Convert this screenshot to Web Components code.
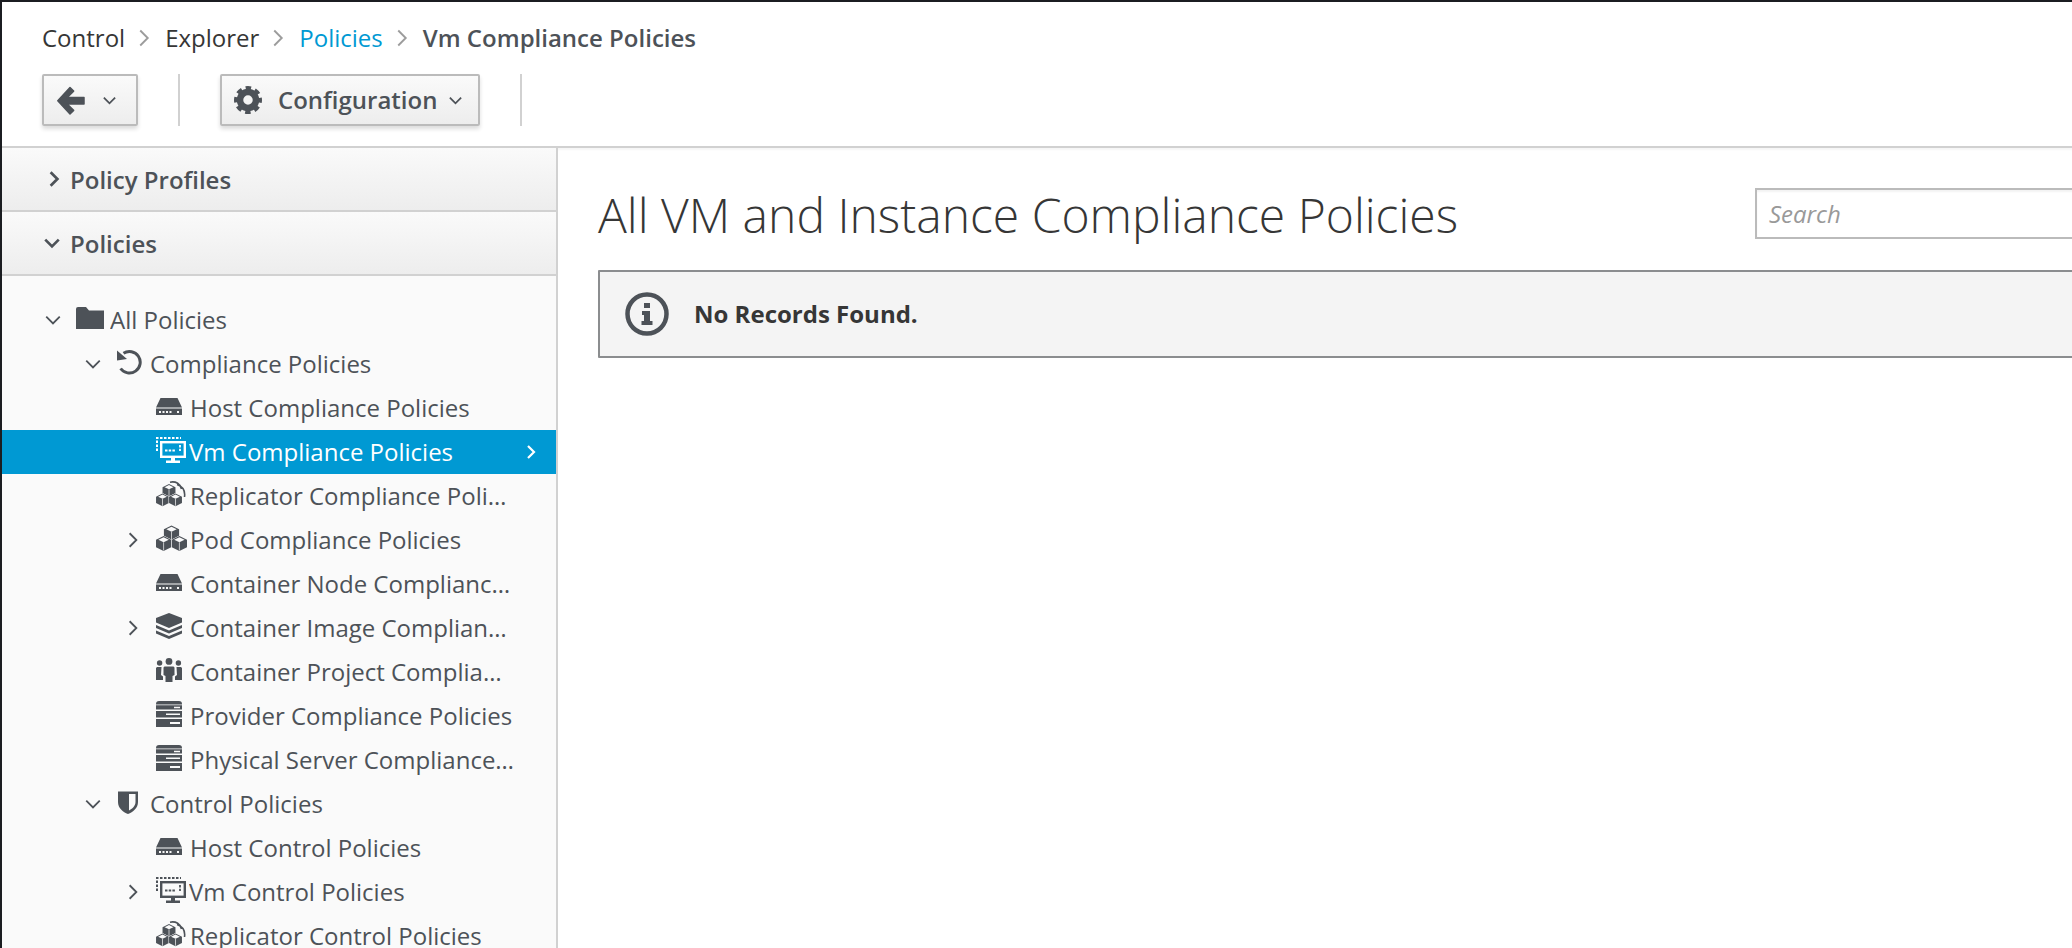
<!DOCTYPE html>
<html>
<head>
<meta charset="utf-8">
<title>Vm Compliance Policies</title>
<style>
  html, body { margin: 0; height: 100%; background: #fff; }
  body { font-family: "Open Sans", "Liberation Sans", sans-serif; color: #363636; overflow: hidden; }
</style>
</head>
<body>
<policy-app>
  <bread-crumbs slot="top">
    <a>Control</a><a>Explorer</a><a class="link">Policies</a><a class="current">Vm Compliance Policies</a>
  </bread-crumbs>
  <tool-bar slot="top">
    <tool-button icon="back" class="narrow"></tool-button>
    <tool-button icon="gear">Configuration</tool-button>
  </tool-bar>

  <side-header slot="side">Policy Profiles</side-header>
  <side-header slot="side" open>Policies</side-header>
  <tree-list slot="side">
    <tree-node level="0" toggle="open" icon="folder">All Policies</tree-node>
    <tree-node level="1" toggle="open" icon="history">Compliance Policies</tree-node>
    <tree-node level="2" icon="host">Host Compliance Policies</tree-node>
    <tree-node level="2" icon="vm" selected>Vm Compliance Policies</tree-node>
    <tree-node level="2" icon="replicator">Replicator Compliance Policies</tree-node>
    <tree-node level="2" toggle="closed" icon="pod">Pod Compliance Policies</tree-node>
    <tree-node level="2" icon="host">Container Node Compliance Policies</tree-node>
    <tree-node level="2" toggle="closed" icon="image">Container Image Compliance Policies</tree-node>
    <tree-node level="2" icon="users">Container Project Compliance Policies</tree-node>
    <tree-node level="2" icon="server">Provider Compliance Policies</tree-node>
    <tree-node level="2" icon="server">Physical Server Compliance Policies</tree-node>
    <tree-node level="1" toggle="open" icon="shield">Control Policies</tree-node>
    <tree-node level="2" icon="host">Host Control Policies</tree-node>
    <tree-node level="2" toggle="closed" icon="vm">Vm Control Policies</tree-node>
    <tree-node level="2" icon="replicator">Replicator Control Policies</tree-node>
  </tree-list>

  <page-title slot="main">All VM and Instance Compliance Policies</page-title>
  <info-box slot="main">No Records Found.</info-box>
</policy-app>

<script>
// one cube: dark hexagon, light top face, thin slit between the two side faces
function cube(cx, t, s) {
  const a = 7.6 * s, b = 3.8 * s, h = 7.5 * s;
  const ia = 5.2 * s, ib = 2.5 * s, top = t + b;
  return `<path d="M${cx} ${t}L${cx + a} ${t + b}V${t + b + h}L${cx} ${t + 2 * b + h}L${cx - a} ${t + b + h}V${t + b}Z" fill="currentColor" stroke="#fafafa" stroke-width="1" paint-order="stroke"/>` +
    `<path d="M${cx} ${top - ib}L${cx + ia} ${top}L${cx} ${top + ib}L${cx - ia} ${top}Z" fill="#fafafa"/>` +
    `<path d="M${cx} ${top + ib}V${t + 2 * b + h - .6}" stroke="#fafafa" stroke-width=".7"/>`;
}

const icons = {
  back: [28, 29, `<path d="M13 1.5l3.6 3.6-6.4 6.4H27v6.5H10.200l6.400 6.400L13 28 .8 14.800z" fill="currentColor" stroke="currentColor" stroke-width="1.500" stroke-linejoin="round"/>`],
  gear: [28, 28, `<circle cx="14" cy="14" r="8" fill="none" stroke="currentColor" stroke-width="6.500"/>
    <circle cx="14" cy="14" r="12" fill="none" stroke="currentColor" stroke-width="4" stroke-dasharray="5.400 4.025" stroke-dashoffset="2.700"/>`],
  folder: [28, 22, `<path d="M0 2Q0 0 2 0H10L13 3.500H28V22H0Z" fill="currentColor"/>`],
  history: [26, 26, `<path d="M7.500 4.200A10.800 10.800 0 1 1 4.600 19.500" fill="none" stroke="currentColor" stroke-width="3"/><path d="M1 1.500V11.500L11 10Z" fill="currentColor"/>`],
  host: [26, 17, `<path fill-rule="evenodd" fill="currentColor" d="M4.500 0H21.500L26 9.500H0ZM0 10.500H26V17H0ZM3 13v2h2v-2ZM6.500 13v2h2v-2ZM10 13v2h2v-2ZM13.500 13v2h2v-2ZM21 13v2h2v-2Z"/>`],
  vm: [30, 26, `<path d="M1 14V1H25" fill="none" stroke="currentColor" stroke-width="2" stroke-dasharray="2.500 1.500"/>
    <rect x="5.200" y="5.200" width="23.600" height="14.600" fill="none" stroke="currentColor" stroke-width="2.400"/>
    <path d="M9 13.500H19M24 8V14" fill="none" stroke="currentColor" stroke-width="1.800" stroke-dasharray="2.500 1.200"/>
    <path d="M15 20h4v3.500h5V26H10v-2.500h5Z" fill="currentColor"/>`],
  pod: [31, 27, cube(15.500, .5, 1) + cube(7.600, 11, 1) + cube(23.400, 11, 1)],
  replicator: [30, 26, cube(13, 3, .85) + cube(6.500, 12.500, .85) + cube(19.500, 12.500, .85) +
    `<path d="M14 1.200C20 0 24.500 3 25.500 8M21 3.500C25.500 5 29.500 9 28.500 16" fill="none" stroke="currentColor" stroke-width="1.600"/>`],
  image: [26, 26, `<path fill="currentColor" d="M13 0L26 5V9.500L13 15 0 9.500V5ZM0 12L13 17.500 26 12V15L13 20.500 0 15ZM0 17.500L13 23 26 17.500V20.500L13 26 0 20.500Z"/>`],
  users: [26, 24, `<g fill="currentColor"><circle cx="13" cy="3.400" r="3.400"/><circle cx="3.600" cy="5" r="2.700"/><circle cx="22.400" cy="5" r="2.700"/>
    <path d="M8.500 8.500h9l1 1v7.500l-2 1V24h-7V18l-2-1V9.500Z"/><path d="M1 9h4.500L5 17l2 1.500V22H0V10ZM25 9h-4.500l.5 8-2 1.500V22h7V10Z"/></g>`],
  server: [26, 26, `<path fill-rule="evenodd" fill="currentColor" d="M3 0H23Q26 0 26 3V8.500H0V3Q0 0 3 0ZM0 3.500V4.300H26V3.500ZM18 5.800v1.500h6V5.800ZM0 10H26V16.500H0ZM10 12.400v1.700h14V12.400ZM0 18H26V26H0ZM14 21v2h10V21Z"/>`],
  shield: [20, 23, `<path fill-rule="evenodd" fill="currentColor" d="M0 .5H20V11C20 17 15 21 10 23 5 21 0 17 0 11ZM11 3V19.500C14 18 17.500 15 17.500 11V3Z"/>`],
  info: [44, 44, `<circle cx="22" cy="22" r="19.500" fill="none" stroke="currentColor" stroke-width="4.500"/>
    <path fill="currentColor" d="M19 11h6v5h-6ZM17 19h8v10h2.500v4h-11v-4H19v-6h-2Z"/>`]
};

function svgFor(name) {
  const [w, h, body] = icons[name];
  return `<svg width="${w}" height="${h}" viewBox="0 0 ${w} ${h}" style="display:block">${body}</svg>`;
}

function chevron(dir, size, width) {
  // right / down, drawn in a 16 box
  const d = dir === "down" ? "M2 5l6 6 6-6" : "M5 2l6 6-6 6";
  return `<svg width="${size}" height="${size}" viewBox="0 0 16 16" style="display:block"><path d="${d}" fill="none" stroke="currentColor" stroke-width="${width}"/></svg>`;
}

const appTemplate = document.createElement("template");
appTemplate.innerHTML = `
<style>
  :host { display: flex; flex-direction: column; height: 100vh; box-sizing: border-box;
    border-top: 2px solid #1b1d21; border-left: 2px solid #1b1d21; }
  header { height: 144px; flex: none; padding-left: 40px; border-bottom: 2px solid #d1d1d1; box-sizing: content-box; }
  .body { display: flex; flex: 1; min-height: 0; }
  aside { width: 554px; flex: none; background: #fafafa; border-right: 2px solid #d1d1d1; overflow: hidden; }
  main { flex: 1; min-width: 0; overflow: hidden; box-shadow: inset 0 3px 2px -1px rgba(0,0,0,.04); }
  .inner { width: 1757px; padding: 40px 0 0 40px; }
</style>
<header><slot name="top"></slot></header>
<div class="body">
  <aside><slot name="side"></slot></aside>
  <main><div class="inner"><slot name="main"></slot></div></main>
</div>`;

class PolicyApp extends HTMLElement {
  constructor() {
    super();
    this.attachShadow({ mode: "open" }).append(appTemplate.content.cloneNode(true));
  }
}
customElements.define("policy-app", PolicyApp);

class BreadCrumbs extends HTMLElement {
  constructor() {
    super();
    const shadow = this.attachShadow({ mode: "open" });
    const links = [...this.querySelectorAll("a")];
    const style = `<style>
      :host { display: flex; align-items: center; height: 54px; padding-top: 17px; box-sizing: border-box;
        font-size: 24px; color: #363636; white-space: nowrap; }
      .sep { color: #9c9c9c; margin: 1px 11px 0 9px; }
      .link { color: #0099d3; }
      .current { color: #4d5258; font-weight: 600; }
    </style>`;
    shadow.innerHTML = style + links.map((a, i) =>
      `<span class="${a.className}">${a.textContent}</span>` +
      (i < links.length - 1 ? `<span class="sep">${chevron("right", 20, 1.500)}</span>` : "")).join("");
  }
}
customElements.define("bread-crumbs", BreadCrumbs);

const barTemplate = document.createElement("template");
barTemplate.innerHTML = `
<style>
  :host { display: flex; align-items: flex-start; padding-top: 18px; }
  ::slotted(tool-button) { margin-right: 40px; }
</style>
<slot></slot>`;

class ToolBar extends HTMLElement {
  constructor() {
    super();
    this.attachShadow({ mode: "open" }).append(barTemplate.content.cloneNode(true));
  }
}
customElements.define("tool-bar", ToolBar);

class ToolButton extends HTMLElement {
  constructor() {
    super();
    const hasText = this.textContent.trim().length > 0;
    this.attachShadow({ mode: "open" }).innerHTML = `
    <style>
      :host { display: flex; height: 52px; }
      /* divider hangs off the right of each group */
      :host::after { content: ""; width: 2px; height: 52px; background: #d1d1d1; margin-left: 40px; }
      button { display: flex; align-items: center; height: 52px; box-sizing: border-box; margin: 0;
        padding: 0 ${hasText ? 15 : 19}px 0 ${hasText ? 12 : 13}px; color: #4d5258;
        border: 2px solid #bbb; border-radius: 2px; font: 600 24px "Open Sans", sans-serif;
        background: linear-gradient(#fafafa, #ededed); box-shadow: 0 3px 4px rgba(3,3,3,.14); }
      .label { margin: 0 0 2px 16px; }
      .caret { margin-left: ${hasText ? 11 : 17}px; }
    </style>
    <button>${svgFor(this.getAttribute("icon"))}${hasText ? `<span class="label"><slot></slot></span>` : ""}<span class="caret">${chevron("down", 15, 1.900)}</span></button>`;
  }
}
customElements.define("tool-button", ToolButton);

class SideHeader extends HTMLElement {
  constructor() {
    super();
    const open = this.hasAttribute("open");
    this.attachShadow({ mode: "open" }).innerHTML = `
    <style>
      :host { display: block; }
      div { display: flex; align-items: center; height: 62px; border-bottom: 2px solid #d1d1d1;
        background: linear-gradient(#fafafa, #ededed); color: #4d5258; font-weight: 600; font-size: 24px; }
      .c { width: 68px; flex: none; display: flex; justify-content: flex-end; }
      .c svg { margin-right: ${open ? 9 : 7}px; }
    </style>
    <div><span class="c">${chevron(open ? "down" : "right", 18, 2.400)}</span><slot></slot></div>`;
  }
}
customElements.define("side-header", SideHeader);

const listTemplate = document.createElement("template");
listTemplate.innerHTML = `
<style>
  :host { display: block; padding-top: 22px; background: #fafafa; }
</style>
<slot></slot>`;

class TreeList extends HTMLElement {
  constructor() {
    super();
    this.attachShadow({ mode: "open" }).append(listTemplate.content.cloneNode(true));
  }
}
customElements.define("tree-list", TreeList);

class TreeNode extends HTMLElement {
  constructor() {
    super();
    const level = Number(this.getAttribute("level") || 0);
    const toggle = this.getAttribute("toggle");
    const icon = this.getAttribute("icon");
    const selected = this.hasAttribute("selected");
    const toggleSvg = toggle ? chevron(toggle === "open" ? "down" : "right", 18, 1.600) : "";
    this.attachShadow({ mode: "open" }).innerHTML = `
    <style>
      :host { display: block; }
      .row { display: flex; align-items: center; height: 44px; padding-left: ${40 * level}px;
        font-size: 24px; color: ${selected ? "#fff" : "#4d5258"}; background: ${selected ? "#0099d3" : "transparent"}; }
      .toggle { width: 74px; flex: none; display: flex; justify-content: flex-end; padding-right: 14px; box-sizing: border-box; }
      .icon { width: 34px; flex: none; margin-top: -4px; }
      .icon.shield { padding-left: 2px; box-sizing: border-box; }
      .icon.vm { width: 33px; }
      .text { flex: 1; min-width: 0; white-space: nowrap; overflow: hidden; text-overflow: ellipsis; margin-top: -2px; }
      .end { width: 40px; flex: none; display: flex; justify-content: flex-start; padding-left: 7px; box-sizing: border-box; }
    </style>
    <div class="row">
      <span class="toggle">${toggleSvg}</span>
      <span class="icon ${icon}">${svgFor(icon)}</span>
      <span class="text"><slot></slot></span>
      <span class="end">${selected ? chevron("right", 16, 2.200) : ""}</span>
    </div>`;
  }
}
customElements.define("tree-node", TreeNode);

class PageTitle extends HTMLElement {
  constructor() {
    super();
    this.attachShadow({ mode: "open" }).innerHTML = `
    <style>
      :host { display: flex; justify-content: space-between; align-items: center; height: 51px; margin-bottom: 31px; }
      h1 { margin: 1px 0 0; font-weight: 300; font-size: 48px; color: #363636; white-space: nowrap; line-height: 51px; }
      .search { width: 600px; height: 51px; box-sizing: border-box; border: 2px solid #bbb; background: #fff;
        padding-left: 12px; display: flex; align-items: center; font-style: italic; font-size: 24px; color: #999;
        box-shadow: inset 0 2px 2px rgba(3,3,3,.05); }
    </style>
    <h1><slot></slot></h1>
    <div class="search" role="searchbox">Search</div>`;
  }
}
customElements.define("page-title", PageTitle);

class InfoBox extends HTMLElement {
  constructor() {
    super();
    this.attachShadow({ mode: "open" }).innerHTML = `
    <style>
      :host { display: flex; align-items: center; height: 88px; box-sizing: border-box; padding-left: 25px;
        border: 2px solid #8b8d8f; background: #f4f4f4; border-radius: 1px; }
      .i { color: #4d5258; margin-right: 25px; }
      b { font-size: 24px; color: #363636; font-weight: 700; margin-bottom: 2px; }
    </style>
    <span class="i">${svgFor("info")}</span><b><slot></slot></b>`;
  }
}
customElements.define("info-box", InfoBox);
</script>
</body>
</html>
